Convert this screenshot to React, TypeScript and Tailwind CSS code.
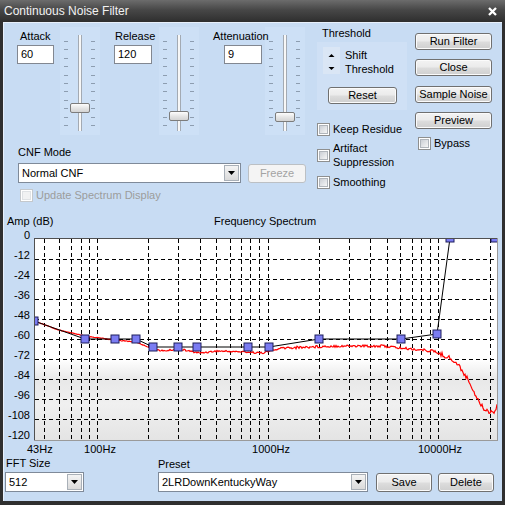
import React from 'react';

const gridX = [44, 59, 71, 81, 89, 97, 148, 178, 200, 216, 230, 241, 250, 259, 268, 319, 349, 370, 387, 400, 412, 421, 430, 438, 490];
const gridY = [259, 279, 299, 319, 339, 359, 379, 399, 419];
const yLabels = ['0', '-12', '-24', '-36', '-48', '-60', '-72', '-84', '-96', '-108', '-120'];

const ctrlPoints: Array<[number, number]> = [
  [34, 321], [85, 339], [115, 339], [136, 339], [153, 347], [178, 347], [197, 347],
  [248, 347], [269, 347], [319, 339], [401, 339], [437, 334], [450, 238], [495, 238],
];

const redAnchors: Array<[number, number]> = [
  [35, 321], [58, 330], [85, 336], [115, 340], [136, 342], [153, 349], [163, 351], [178, 349],
  [200, 353], [217, 351], [247, 352], [262, 353], [283, 348], [335, 346], [383, 346], [400, 348],
  [433, 351], [450, 358], [460, 367], [470, 383], [477, 398], [483, 408], [490, 412], [495, 411], [497, 404],
];

function interp(x: number) {
  for (let i = 0; i < redAnchors.length - 1; i++) {
    const [x0, y0] = redAnchors[i];
    const [x1, y1] = redAnchors[i + 1];
    if (x >= x0 && x <= x1) return y0 + ((x - x0) / (x1 - x0)) * (y1 - y0);
  }
  return redAnchors[redAnchors.length - 1][1];
}

function redLine() {
  const pts: string[] = [];
  for (let x = 35; x <= 497; x++) {
    const amp = x < 150 ? 0.3 : x < 280 ? 0.8 : x < 440 ? 1.3 : 2.2;
    const n = Math.sin(x * 12.9898) * 43758.5453;
    const r = n - Math.floor(n);
    pts.push(`${x},${(interp(x) + (r - 0.5) * 2 * amp).toFixed(1)}`);
  }
  return pts.join(' ');
}

function Btn({ label, className = '', disabled = false }: { label: string; className?: string; disabled?: boolean }) {
  return (
    <div
      className={`flex items-center justify-center rounded-[3px] border text-[11px] leading-none ${
        disabled
          ? 'border-[#bcc0c4] bg-[#f4f4f4] text-[#a3a3a3]'
          : 'border-[#707070] bg-[linear-gradient(#f3f3f3_0%,#ebebeb_48%,#dddddd_52%,#cfcfcf_100%)] text-black shadow-[inset_0_0_0_1px_#fbfbfb]'
      } ${className}`}
    >
      {label}
    </div>
  );
}

function Check({ disabled = false }: { disabled?: boolean }) {
  return (
    <div className={`h-[13px] w-[13px] shrink-0 border bg-white p-px ${disabled ? 'border-[#c4c8cc]' : 'border-[#8e8f8f]'}`}>
      <div
        className={`h-full w-full border ${
          disabled ? 'border-[#dfe2e5] bg-[#f1f2f3]' : 'border-[#b0b5bb] bg-[linear-gradient(135deg,#cbcfd5,#f6f6f6)]'
        }`}
      />
    </div>
  );
}

function Select({ value, className = '' }: { value: string; className?: string }) {
  return (
    <div className={`flex h-[20px] items-center border border-[#7f8a99] bg-white ${className}`}>
      <span className="flex-1 pl-[3px] text-[11px] leading-none">{value}</span>
      <div className="mr-px flex h-[16px] w-[15px] items-center justify-center border border-[#a9b0b8] bg-[linear-gradient(#f4f4f4,#dadada)]">
        <svg width="7" height="4" viewBox="0 0 7 4">
          <path d="M0 0h7L3.5 4z" fill="#000" />
        </svg>
      </div>
    </div>
  );
}

function NumField({ label, value, className, labelClass = '', inputClass = '' }: {
  label: string; value: string; className: string; labelClass?: string; inputClass?: string;
}) {
  return (
    <div className={`relative z-10 mt-[7px] flex shrink-0 flex-col ${className}`}>
      <span className={`h-[14px] whitespace-nowrap text-[11px] leading-[14px] ${labelClass}`}>{label}</span>
      <div className={`mt-[2px] h-[19px] border border-[#828790] bg-white pl-[3px] text-[11px] leading-[17px] ${inputClass}`}>
        {value}
      </div>
    </div>
  );
}

function Ticks() {
  return (
    <div className="mt-[14px] flex h-[85px] w-[4px] flex-col justify-between">
      {Array.from({ length: 11 }, (_, i) => (
        <div key={i} className="h-px w-[4px] bg-[#8d9db0]" />
      ))}
    </div>
  );
}

function Slider({ className, thumbClass }: { className: string; thumbClass: string }) {
  return (
    <div className={`relative mt-[5px] flex h-[108px] w-[40px] shrink-0 bg-[#cde0f6] ${className}`}>
      <div className="ml-[4px]">
        <Ticks />
      </div>
      <div className="ml-[10px] mt-[8px] h-[96px] w-[4px] border-x border-[#a3aab3] bg-[#f7f7f7]" />
      <div className="ml-[9px]">
        <Ticks />
      </div>
      {/* thumb */}
      <div
        className={`absolute left-[10px] h-[10px] w-[20px] rounded-[2px] border border-[#7c7c7c] bg-[linear-gradient(#fdfdfd,#e6e6e6_50%,#d4d4d4)] ${thumbClass}`}
      />
    </div>
  );
}

function Chart() {
  return (
    <svg width="499" height="226" viewBox="3 228 499 226" className="block">
      <defs>
        <linearGradient id="pbg" gradientUnits="userSpaceOnUse" x1="0" y1="239" x2="0" y2="440">
          <stop offset="0" stopColor="#ffffff" />
          <stop offset="0.6" stopColor="#ffffff" />
          <stop offset="0.7" stopColor="#e8e8e8" />
          <stop offset="0.82" stopColor="#f0f0f0" />
          <stop offset="1" stopColor="#e4e4e4" />
        </linearGradient>
        <clipPath id="pc">
          <rect x="35" y="239" width="462" height="201" />
        </clipPath>
      </defs>

      <rect x="35" y="239" width="462" height="201" fill="url(#pbg)" />

      {/* grid */}
      <g clipPath="url(#pc)" stroke="#000" strokeWidth="1" strokeDasharray="4 3" shapeRendering="crispEdges">
        {gridY.map(y => (
          <line key={y} x1="35" x2="497" y1={y + 0.5} y2={y + 0.5} />
        ))}
        {gridX.map(x => (
          <line key={x} x1={x + 0.5} x2={x + 0.5} y1="239" y2="440" />
        ))}
      </g>

      {/* curves */}
      <g clipPath="url(#pc)">
        <polyline points={redLine()} fill="none" stroke="#ff0000" strokeWidth="1.2" />
        <polyline points={ctrlPoints.map(p => p.join(',')).join(' ')} fill="none" stroke="#000" strokeWidth="1" />
        {ctrlPoints.map(([x, y]) => (
          <rect key={`${x}-${y}`} x={x - 4} y={y - 4} width="8" height="8" fill="#7b7cf2" stroke="#1e1e5c" strokeWidth="1" />
        ))}
      </g>

      {/* frame */}
      <g shapeRendering="crispEdges">
        <line x1="34" x2="498" y1="238.5" y2="238.5" stroke="#505050" />
        <line x1="34.5" x2="34.5" y1="238" y2="441" stroke="#505050" />
        <line x1="497.5" x2="497.5" y1="238" y2="441" stroke="#9a9a9a" />
        <line x1="34" x2="498" y1="440.5" y2="440.5" stroke="#9a9a9a" />
      </g>

      {/* labels */}
      <g fontSize="11" fill="#000">
        {yLabels.map((t, i) => (
          <text key={t} x="30" y={239 + i * 20} textAnchor="end">
            {t}
          </text>
        ))}
        <text x="27" y="453">43Hz</text>
        <text x="100" y="453" textAnchor="middle">100Hz</text>
        <text x="271" y="453" textAnchor="middle">1000Hz</text>
        <text x="440" y="453" textAnchor="middle">10000Hz</text>
      </g>
    </svg>
  );
}

export default function App() {
  return (
    <div className="h-[505px] w-[505px] overflow-hidden bg-[#2f2f2f] font-['Liberation_Sans',Arial,sans-serif] text-black">
      {/* Title bar */}
      <div className="flex h-[22px] items-center justify-between bg-[linear-gradient(#6c6c6c,#474747_45%,#2e2e2e)] pl-[4px] pr-[8px]">
        <span className="text-[12px] text-[#f2f2f2]">Continuous Noise Filter</span>
        <svg width="9" height="9" viewBox="0 0 9 9">
          <path d="M1 1L8 8M8 1L1 8" stroke="#fff" strokeWidth="2.3" />
        </svg>
      </div>

      <div className="ml-[3px] flex h-[479px] w-[499px] flex-col bg-[#c8dcf3] shadow-[inset_1px_1px_0_#e8f0fb]">
        {/* Controls */}
        <div className="flex h-[192px]">
          {/* Left: sliders + CNF mode */}
          <div className="flex w-[311px] shrink-0 flex-col">
            <div className="flex h-[118px] items-start">
              <NumField label="Attack" value="60" className="ml-[14px] w-[37px]" labelClass="ml-[3px]" />
              <Slider className="ml-[6px]" thumbClass="top-[76px]" />
              <NumField label="Release" value="120" className="ml-[14px] w-[38px]" labelClass="ml-[1px]" />
              <Slider className="ml-[7px]" thumbClass="top-[84px]" />
              <NumField label="Attenuation" value="9" className="ml-[14px] w-[52px]" inputClass="ml-[11px] w-[38px]" />
              <Slider className="ml-0" thumbClass="top-[85px]" />
            </div>

            <span className="ml-[15px] mt-[5px] h-[14px] text-[11px] leading-[14px]">CNF Mode</span>
            <div className="ml-[15px] mt-[4px] flex items-center">
              <Select value="Normal CNF" className="w-[223px]" />
              <Btn label="Freeze" disabled className="ml-[7px] h-[19px] w-[58px]" />
            </div>
            <div className="ml-[17px] mt-[5px] flex h-[14px] items-center gap-[3px]">
              <Check disabled />
              <span className="text-[11px] leading-none text-[#9c9c9c]">Update Spectrum Display</span>
            </div>
          </div>

          {/* Middle: threshold + options */}
          <div className="flex w-[95px] shrink-0 flex-col pl-[3px]">
            <span className="ml-[5px] mt-[4px] h-[14px] text-[11px] leading-[14px]">Threshold</span>
            <div className="mt-[2px] flex h-[68px] w-[90px] flex-col bg-[#cfe0f5]">
              <div className="mt-[5px] flex">
                <svg width="17" height="27" viewBox="0 0 17 27" className="ml-[6px] shrink-0">
                  <rect width="17" height="27" fill="#dae6f5" />
                  <path d="M5.5 10h6L8.5 7z" fill="#000" />
                  <path d="M5.5 20h6L8.5 23z" fill="#000" />
                </svg>
                <div className="ml-[5px] mt-px flex flex-col text-[11px] leading-[14px]">
                  <span>Shift</span>
                  <span>Threshold</span>
                </div>
              </div>
              <Btn label="Reset" className="ml-[11px] mt-[11px] h-[17px] w-[69px]" />
            </div>

            <div className="mt-[12px] flex h-[14px] items-center gap-[3px]">
              <Check />
              <span className="text-[11px] leading-none">Keep Residue</span>
            </div>
            <div className="mt-[5px] flex items-center gap-[3px]">
              <Check />
              <div className="flex flex-col text-[11px] leading-[14px]">
                <span>Artifact</span>
                <span>Suppression</span>
              </div>
            </div>
            <div className="mt-[6px] flex h-[14px] items-center gap-[3px]">
              <Check />
              <span className="text-[11px] leading-none">Smoothing</span>
            </div>
          </div>

          {/* Right: buttons */}
          <div className="ml-[6px] flex w-[77px] shrink-0 flex-col">
            <Btn label="Run Filter" className="mt-[11px] h-[17px]" />
            <Btn label="Close" className="mt-[9px] h-[17px]" />
            <Btn label="Sample Noise" className="mt-[10px] h-[17px]" />
            <Btn label="Preview" className="mt-[9px] h-[17px]" />
            <div className="ml-[3px] mt-[7px] flex h-[14px] items-center gap-[3px]">
              <Check />
              <span className="text-[11px] leading-none">Bypass</span>
            </div>
          </div>
        </div>

        {/* Chart headings */}
        <div className="flex h-[14px] text-[11px] leading-[14px]">
          <span className="ml-[4px] w-[46px] whitespace-nowrap">Amp (dB)</span>
          <span className="ml-[161px] whitespace-nowrap">Frequency Spectrum</span>
        </div>

        <Chart />

        {/* Bottom row */}
        <div className="flex h-[47px] items-start">
          <div className="ml-[2px] flex w-[79px] flex-col">
            <span className="ml-px mt-[2px] h-[14px] text-[11px] leading-[14px]">FFT Size</span>
            <Select value="512" className="mt-[2px]" />
          </div>
          <div className="ml-[74px] flex w-[210px] flex-col">
            <span className="mt-[3px] h-[14px] text-[11px] leading-[14px]">Preset</span>
            <Select value="2LRDownKentuckyWay" className="mt-px" />
          </div>
          <Btn label="Save" className="ml-[8px] mt-[19px] h-[19px] w-[56px]" />
          <Btn label="Delete" className="ml-[6px] mt-[19px] h-[19px] w-[56px]" />
        </div>
      </div>
    </div>
  );
}
